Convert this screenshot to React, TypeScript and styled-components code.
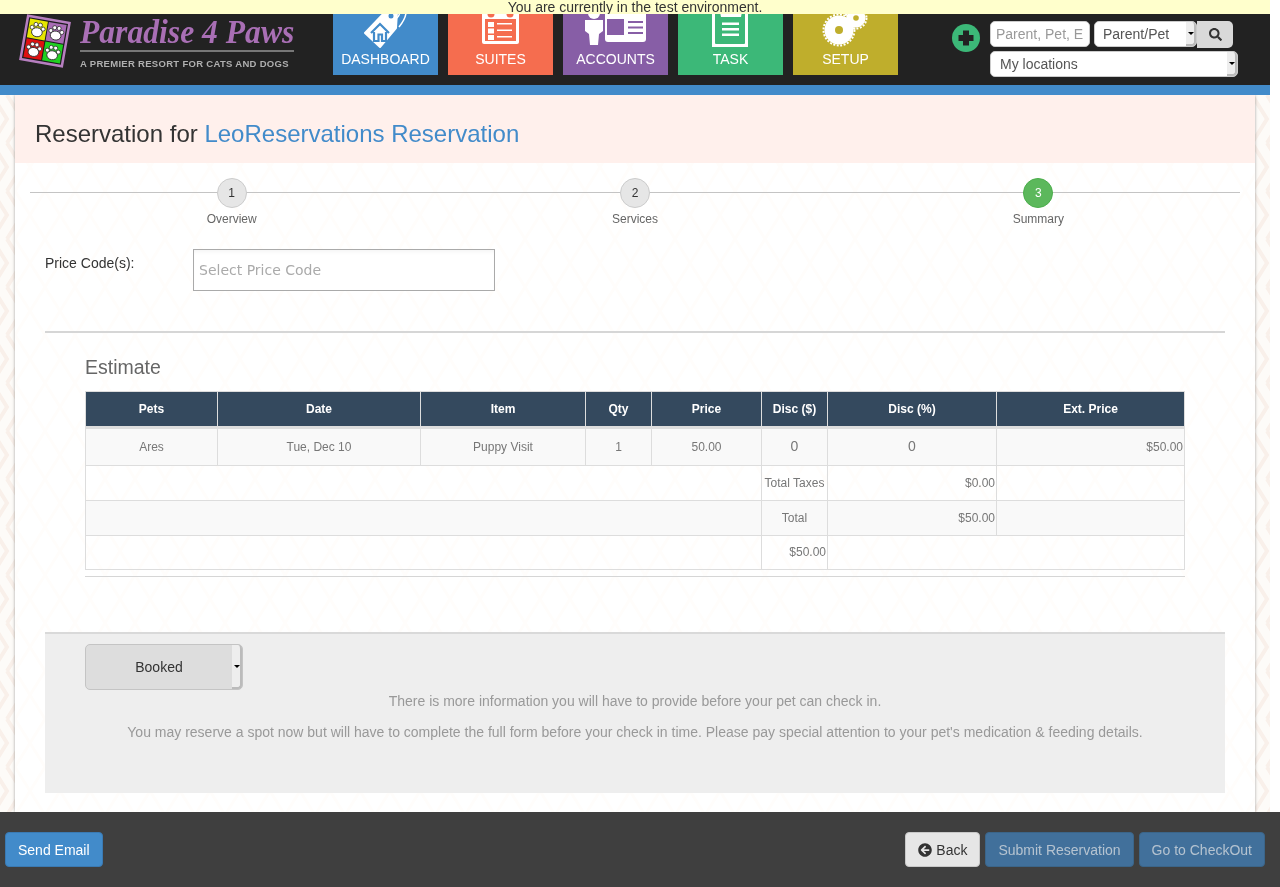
import React from "react";
import styled, { createGlobalStyle } from "styled-components";
import { FaArrowCircleLeft, FaSearch } from "react-icons/fa";

const patternSide = `url("data:image/svg+xml,%3Csvg xmlns='http://www.w3.org/2000/svg' width='30' height='48'%3E%3Cpath d='M-8 0L7 24L-8 48M7 0L22 24L7 48M22 0L37 24L22 48' fill='none' stroke='%23f9f0ea' stroke-width='4'/%3E%3C/svg%3E")`;
const patternCard = `url("data:image/svg+xml,%3Csvg xmlns='http://www.w3.org/2000/svg' width='60' height='48'%3E%3Cpath d='M0 0L15 24L0 48M30 0L15 24L30 48M30 0L45 24L30 48M60 0L45 24L60 48' fill='none' stroke='%23fffdfb' stroke-width='3'/%3E%3C/svg%3E")`;

const Global = createGlobalStyle`
  html, body { margin: 0; padding: 0; height: 100%; background: #fff; overflow: hidden; }
  body { font-family: "Liberation Sans", Arial, sans-serif; font-size: 14px; color: #333; }
  #root { height: 100%; }
  * { box-sizing: border-box; }
`;

const Page = styled.div`
  height: 887px;
  display: flex;
  flex-direction: column;
  will-change: transform;
`;
const Banner = styled.div`
  width: 1270px;
  height: 14px;
  flex: none;
  background: #ffffcc;
  color: #333;
  font-size: 14px;
  line-height: 14px;
  text-align: center;
  overflow: hidden;
`;
const Header = styled.header`
  width: 1270px;
  height: 71px;
  flex: none;
  background: #222222;
  display: flex;
  overflow: hidden;
`;
const LogoWrap = styled.div`
  width: 333px;
  flex: none;
  display: flex;
  padding-left: 18px;
`;
const LogoWords = styled.div`
  margin-left: 6px;
  width: 214px;
  display: flex;
  flex-direction: column;
`;
const LogoName = styled.div`
  height: 36px;
  font-family: "Liberation Serif", serif;
  font-style: italic;
  font-weight: bold;
  font-size: 34px;
  line-height: 36px;
  white-space: nowrap;
  color: #a96fb5;
  transform: scaleX(0.93);
  transform-origin: left;
`;
const LogoRule = styled.div`
  height: 2px;
  background: #777;
`;
const LogoTag = styled.div`
  margin-top: 6px;
  font-size: 9.500px;
  line-height: 11px;
  font-weight: bold;
  color: #b0b0b0;
  white-space: nowrap;
  letter-spacing: 0.3px;
`;
const Tiles = styled.nav`
  display: flex;
  gap: 10px;
  align-items: flex-start;
`;
const Tile = styled.a<{ $bg: string }>`
  width: 105px;
  height: 61px;
  background: ${(p) => p.$bg};
  color: #fff;
  display: flex;
  flex-direction: column;
  align-items: center;
  font-size: 14px;
  line-height: 20px;
  svg { display: block; flex: none; }
`;
const Tools = styled.div`
  margin-left: 54px;
  display: flex;
  gap: 10px;
  padding-top: 7px;
`;
const AddIcon = styled.svg`
  width: 28px;
  height: 28px;
  margin-top: 3px;
  flex: none;
`;
const SearchStack = styled.div`
  display: flex;
  flex-direction: column;
  gap: 4px;
  width: 248px;
`;
const SearchRow = styled.div`
  display: flex;
  height: 26px;
`;
const SearchInput = styled.div`
  width: 100px;
  height: 26px;
  background: #fff;
  border: 1px solid #ccc;
  border-radius: 5px;
  color: #999;
  font-size: 14px;
  line-height: 24px;
  padding-left: 5px;
  overflow: hidden;
  white-space: nowrap;
`;
const HeaderSelect = styled.div<{ $w: number; $gap?: number; $pad: number }>`
  position: relative;
  width: ${(p) => p.$w}px;
  height: 26px;
  margin-left: ${(p) => p.$gap || 0}px;
  background: #fff;
  border: 1px solid #ccc;
  border-radius: 5px;
  color: #555;
  font-size: 14px;
  line-height: 24px;
  padding-left: ${(p) => p.$pad}px;
  flex: none;
`;
const Strip = styled.span`
  position: absolute;
  top: 0;
  right: 0;
  bottom: 0;
  width: 10px;
  background: #eeeeee;
  border-right: 2px solid #bbb;
  border-bottom: 2px solid #bbb;
  border-radius: 0 4px 4px 0;
  &::after {
    content: "";
    position: absolute;
    left: 2px;
    top: 50%;
    margin-top: -1px;
    border-left: 3px solid transparent;
    border-right: 3px solid transparent;
    border-top: 3px solid #000;
  }
`;
const SearchButton = styled.button`
  width: 36px;
  height: 27px;
  background: #d9d9d9;
  border: 0;
  border-radius: 0 5px 5px 0;
  color: #333;
  font-size: 13px;
  padding: 0;
  display: flex;
  align-items: center;
  justify-content: center;
`;
const BlueBar = styled.div`
  width: 1270px;
  height: 10px;
  flex: none;
  background: #428bca;
`;
const Main = styled.main`
  width: 1270px;
  flex: 1;
  min-height: 0;
  overflow: hidden;
  background: #fdfbf8 ${patternSide};
  padding: 0 15px;
`;
const Card = styled.div`
  width: 1240px;
  height: 100%;
  background: #fff ${patternCard};
  box-shadow: 0 0 3px rgba(0, 0, 0, 0.35);
`;
const TitleBand = styled.div`
  height: 68px;
  background: #fff0ec;
  padding-left: 20px;
  font-size: 24px;
  line-height: 78px;
  color: #333;
  a { color: #428bca; }
`;
const Steps = styled.div`
  position: relative;
  margin: 15px 15px 0;
  display: grid;
  grid-template-columns: repeat(3, 1fr);
  &::before {
    content: "";
    position: absolute;
    left: 0;
    right: 0;
    top: 14px;
    height: 1px;
    background: #c4c4c4;
  }
`;
const Step = styled.div`
  position: relative;
  display: flex;
  flex-direction: column;
  align-items: center;
  font-size: 12px;
  line-height: 17px;
  color: #666;
`;
const Bubble = styled.span<{ $active?: boolean }>`
  width: 30px;
  height: 30px;
  border-radius: 50%;
  margin-bottom: 3px;
  text-align: center;
  font-size: 12px;
  line-height: 28px;
  background: ${(p) => (p.$active ? "#5cb85c" : "#e6e6e6")};
  border: 1px solid ${(p) => (p.$active ? "#4cae4c" : "#ccc")};
  color: ${(p) => (p.$active ? "#fff" : "#333")};
`;
const PriceRow = styled.div`
  margin: 21px 30px 0;
  display: flex;
  height: 42px;
`;
const PriceLabel = styled.label`
  width: 148px;
  flex: none;
  padding-top: 4px;
  line-height: 20px;
  color: #333;
`;
const PriceInput = styled.div`
  width: 302px;
  height: 42px;
  border: 1px solid #aaa;
  background: #fff;
  box-shadow: inset 0 4px 5px -3px rgba(0, 0, 0, 0.06);
  padding-left: 5px;
  font-family: "DejaVu Sans", sans-serif;
  font-size: 14px;
  line-height: 40px;
  color: #aaa;
`;
const Rule = styled.div<{ $inset: number; $top: number; $h: number }>`
  height: ${(p) => p.$h}px;
  margin: ${(p) => p.$top}px ${(p) => p.$inset}px 0;
  background: #d6d6d6;
`;
const EstimateTitle = styled.h3`
  margin: 23px 70px 0;
  font-size: 19.500px;
  font-weight: normal;
  line-height: 22px;
  color: #666;
`;
const TableBox = styled.div`
  margin: 13px 70px 0;
`;
const Table = styled.table`
  width: 1099px;
  table-layout: fixed;
  border-collapse: collapse;
  font-size: 12px;
  color: #777;
`;
const Th = styled.th`
  height: 36px;
  background: #34495e;
  color: #fff;
  font-size: 12px;
  font-weight: bold;
  text-align: center;
  padding: 0;
  border: 1px solid #ddd;
  border-bottom: 3px solid #ddd;
`;
const Row = styled.tr<{ $h: number; $shade?: boolean }>`
  height: ${(p) => p.$h}px;
  background: ${(p) => (p.$shade ? "#f9f9f9" : "transparent")};
`;
const Td = styled.td<{ $align?: string; $big?: boolean; $lift?: boolean }>`
  border: 1px solid #ddd;
  padding: 0 1px ${(p) => (p.$big ? 3 : p.$lift ? 2 : 0)}px;
  text-align: ${(p) => p.$align || "center"};
  font-size: ${(p) => (p.$big ? "14px" : "12px")};
`;
const Panel = styled.section`
  margin: 55px 30px 0;
  height: 161px;
  border-top: 2px solid #d9d9d9;
  background: #eeeeee;
  padding: 10px 40px 0;
`;
const StatusSelect = styled.div`
  position: relative;
  width: 158px;
  height: 46px;
  background: #dddddd;
  border: 1px solid #c4c4c4;
  border-radius: 5px;
  padding-right: 10px;
  text-align: center;
  font-size: 14px;
  line-height: 44px;
  color: #333;
`;
const Note = styled.p`
  margin: 0 0 11px;
  text-align: center;
  color: #999;
  font-size: 14px;
  line-height: 20px;
  &:first-of-type { margin-top: 1px; }
`;
const Footer = styled.footer`
  height: 75px;
  flex: none;
  background: #3f3f3f;
  padding: 20px 15px 0 5px;
  display: flex;
  justify-content: space-between;
  align-items: flex-start;
`;
const Actions = styled.div`
  display: flex;
  gap: 5px;
`;
const Btn = styled.button<{ $kind: "primary" | "muted" | "plain" }>`
  height: 35px;
  padding: 0 12px;
  border-radius: 4px;
  font-family: inherit;
  font-size: 14px;
  display: inline-flex;
  align-items: center;
  gap: 4px;
  background: ${(p) => ({ primary: "#428bca", muted: "#41709b", plain: "#e6e6e6" }[p.$kind])};
  border: 1px solid ${(p) => ({ primary: "#3a7ab3", muted: "#3b6589", plain: "#c8c8c8" }[p.$kind])};
  color: ${(p) => ({ primary: "#fff", muted: "#b5c3d0", plain: "#333" }[p.$kind])};
`;

const Paw = ({ x, y }: { x: number; y: number }) => (
  <g transform={`translate(${x} ${y}) scale(1.12)`}>
    <ellipse cx="0" cy="2.500" rx="4.800" ry="4" fill="#fff" stroke="#333" strokeWidth="0.8" />
    <circle cx="-5" cy="-1.200" r="1.800" fill="#fff" stroke="#333" strokeWidth="0.7" />
    <circle cx="-2" cy="-4.300" r="1.800" fill="#fff" stroke="#333" strokeWidth="0.7" />
    <circle cx="2" cy="-4.300" r="1.800" fill="#fff" stroke="#333" strokeWidth="0.7" />
    <circle cx="5" cy="-1.200" r="1.800" fill="#fff" stroke="#333" strokeWidth="0.7" />
  </g>
);

const LogoMark = () => (
  <svg width="56" height="56" viewBox="0 0 56 56" style={{ flex: "none" }}>
    <g transform="rotate(10 27 27)">
      <rect x="6" y="5" width="42" height="44" fill="#1c1c1c" stroke="#b77fc0" strokeWidth="2.500" />
      <rect x="8.500" y="7.500" width="18" height="19" fill="#e6e600" />
      <rect x="27.500" y="7.500" width="18" height="19" fill="#a86cb4" />
      <rect x="8.500" y="27.500" width="18" height="19" fill="#e01010" />
      <rect x="27.500" y="27.500" width="18" height="19" fill="#20d020" />
      <Paw x={17.5} y={17} />
      <Paw x={36.5} y={17} />
      <Paw x={17.5} y={37} />
      <Paw x={36.5} y={37} />
    </g>
  </svg>
);

const DashIcon = ({ bg }: { bg: string }) => (
  <svg width="105" height="35" viewBox="0 0 105 35">
    <path d="M32 19L52 -2L64 -2L63 14L47 33Z" fill="#fff" stroke="#fff" strokeWidth="2" strokeLinejoin="round" />
    <path d="M38 19L47 10L56 19M41 18V27H45.500V20.500H49V27H53V18" fill="none" stroke={bg} strokeWidth="2.200" />
    <path d="M66 13C70 8 73 3 73 -2M64 4C66 2 67 0 66 -2" fill="none" stroke="#fff" strokeWidth="1.500" />
    <circle cx="58" cy="2" r="2.500" fill={bg} />
  </svg>
);
const SuitesIcon = ({ bg }: { bg: string }) => (
  <svg width="105" height="35" viewBox="0 0 105 35">
    <rect x="34" y="-6" width="37" height="36" rx="2" fill="#fff" />
    <rect x="37" y="5" width="31" height="22" fill={bg} />
    <circle cx="43" cy="0" r="3.500" fill={bg} />
    <circle cx="62" cy="0" r="3.500" fill={bg} />
    <rect x="40" y="8" width="6" height="5" fill="#fff" />
    <rect x="40" y="14.500" width="6" height="5" fill="#fff" />
    <rect x="40" y="21" width="6" height="5" fill="#fff" />
    <rect x="49" y="9" width="15" height="1.500" fill="#fff" />
    <rect x="49" y="15.500" width="15" height="1.500" fill="#fff" />
    <rect x="49" y="22" width="15" height="1.500" fill="#fff" />
  </svg>
);
const AccountsIcon = ({ bg }: { bg: string }) => (
  <svg width="105" height="35" viewBox="0 0 105 35">
    <circle cx="31" cy="-1" r="6" fill="#fff" />
    <path d="M22 6H40V17L36 20L35 31H27L26 20L22 17Z" fill="#fff" />
    <rect x="42" y="-5" width="41" height="33" rx="3" fill="#fff" />
    <rect x="44" y="5" width="17" height="16" fill={bg} />
    <rect x="65" y="7" width="15" height="2" fill={bg} />
    <rect x="65" y="12.500" width="15" height="2" fill={bg} />
    <rect x="65" y="18" width="15" height="2" fill={bg} />
  </svg>
);
const TaskIcon = ({ bg }: { bg: string }) => (
  <svg width="105" height="35" viewBox="0 0 105 35">
    <rect x="34" y="-8" width="36" height="41" fill="#fff" />
    <rect x="37" y="-2" width="30" height="32" rx="1" fill={bg} />
    <path d="M41 -8H65L63 3H43Z" fill="#fff" />
    <rect x="44" y="8.500" width="17" height="2.500" fill="#fff" />
    <rect x="44" y="14" width="17" height="2.500" fill="#fff" />
    <rect x="44" y="19.500" width="17" height="2.500" fill="#fff" />
  </svg>
);
const SetupIcon = ({ bg }: { bg: string }) => (
  <svg width="105" height="35" viewBox="0 0 105 35">
    <circle cx="46" cy="16" r="14.500" fill="#fff" />
    <circle cx="46" cy="16" r="15.500" fill="none" stroke="#fff" strokeWidth="2" strokeDasharray="2 1.500" />
    <circle cx="46" cy="16" r="4" fill={bg} />
    <circle cx="63" cy="4" r="9.500" fill="#fff" />
    <circle cx="63" cy="4" r="10.500" fill="none" stroke="#fff" strokeWidth="2" strokeDasharray="2 1.500" />
    <circle cx="63" cy="4" r="2.800" fill={bg} />
  </svg>
);

const blue = "#428bca", coral = "#f56d4f", purple = "#875ea6", green = "#3cb878", gold = "#bfae2c";

export default function App() {
  return (
    <Page>
      <Global />
      <Banner>You are currently in the test environment.</Banner>
      <Header>
        <LogoWrap>
          <LogoMark />
          <LogoWords>
            <LogoName>Paradise 4 Paws</LogoName>
            <LogoRule />
            <LogoTag>A PREMIER RESORT FOR CATS AND DOGS</LogoTag>
          </LogoWords>
        </LogoWrap>
        <Tiles>
          <Tile $bg={blue}><DashIcon bg={blue} />DASHBOARD</Tile>
          <Tile $bg={coral}><SuitesIcon bg={coral} />SUITES</Tile>
          <Tile $bg={purple}><AccountsIcon bg={purple} />ACCOUNTS</Tile>
          <Tile $bg={green}><TaskIcon bg={green} />TASK</Tile>
          <Tile $bg={gold}><SetupIcon bg={gold} />SETUP</Tile>
        </Tiles>
        <Tools>
          <AddIcon viewBox="0 0 28 28">
            <circle cx="14" cy="14" r="14" fill="#3cb878" />
            <path d="M11 6.500H17V11H21.500V17H17V21.500H11V17H6.500V11H11Z" fill="#222" />
          </AddIcon>
          <SearchStack>
            <SearchRow>
              <SearchInput>Parent, Pet, E</SearchInput>
              <HeaderSelect $w={103} $gap={4} $pad={8}>
                Parent/Pet
                <Strip />
              </HeaderSelect>
              <SearchButton aria-label="Search"><FaSearch /></SearchButton>
            </SearchRow>
            <HeaderSelect $w={248} $pad={9}>
              My locations
              <Strip />
            </HeaderSelect>
          </SearchStack>
        </Tools>
      </Header>
      <BlueBar />
      <Main>
        <Card>
          <TitleBand>
            Reservation for <a>LeoReservations Reservation</a>
          </TitleBand>
          <Steps>
            <Step><Bubble>1</Bubble>Overview</Step>
            <Step><Bubble>2</Bubble>Services</Step>
            <Step><Bubble $active>3</Bubble>Summary</Step>
          </Steps>
          <PriceRow>
            <PriceLabel>Price Code(s):</PriceLabel>
            <PriceInput>Select Price Code</PriceInput>
          </PriceRow>
          <Rule $inset={30} $top={40} $h={2} />
          <EstimateTitle>Estimate</EstimateTitle>
          <TableBox>
            <Table>
              <colgroup>
                {[132, 203, 165, 66, 110, 66, 169, 188].map((w, i) => (
                  <col key={i} width={w} />
                ))}
              </colgroup>
              <thead>
                <tr>
                  {["Pets", "Date", "Item", "Qty", "Price", "Disc ($)", "Disc (%)", "Ext. Price"].map((h) => (
                    <Th key={h}>{h}</Th>
                  ))}
                </tr>
              </thead>
              <tbody>
                <Row $h={38} $shade>
                  <Td>Ares</Td>
                  <Td>Tue, Dec 10</Td>
                  <Td>Puppy Visit</Td>
                  <Td>1</Td>
                  <Td>50.00</Td>
                  <Td $big>0</Td>
                  <Td $big>0</Td>
                  <Td $align="right">$50.00</Td>
                </Row>
                <Row $h={35}>
                  <Td colSpan={5} />
                  <Td>Total Taxes</Td>
                  <Td $align="right">$0.00</Td>
                  <Td />
                </Row>
                <Row $h={35} $shade>
                  <Td colSpan={5} />
                  <Td>Total</Td>
                  <Td $align="right">$50.00</Td>
                  <Td />
                </Row>
                <Row $h={34}>
                  <Td colSpan={5} />
                  <Td $align="right" $lift>$50.00</Td>
                  <Td colSpan={2} />
                </Row>
              </tbody>
            </Table>
          </TableBox>
          <Rule $inset={70} $top={6} $h={1} />
          <Panel>
            <StatusSelect>
              Booked
              <Strip />
            </StatusSelect>
            <Note>There is more information you will have to provide before your pet can check in.</Note>
            <Note>
              You may reserve a spot now but will have to complete the full form before your check in time. Please pay
              special attention to your pet's medication &amp; feeding details.
            </Note>
          </Panel>
        </Card>
      </Main>
      <Footer>
        <Btn $kind="primary">Send Email</Btn>
        <Actions>
          <Btn $kind="plain"><FaArrowCircleLeft />Back</Btn>
          <Btn $kind="muted">Submit Reservation</Btn>
          <Btn $kind="muted">Go to CheckOut</Btn>
        </Actions>
      </Footer>
    </Page>
  );
}
